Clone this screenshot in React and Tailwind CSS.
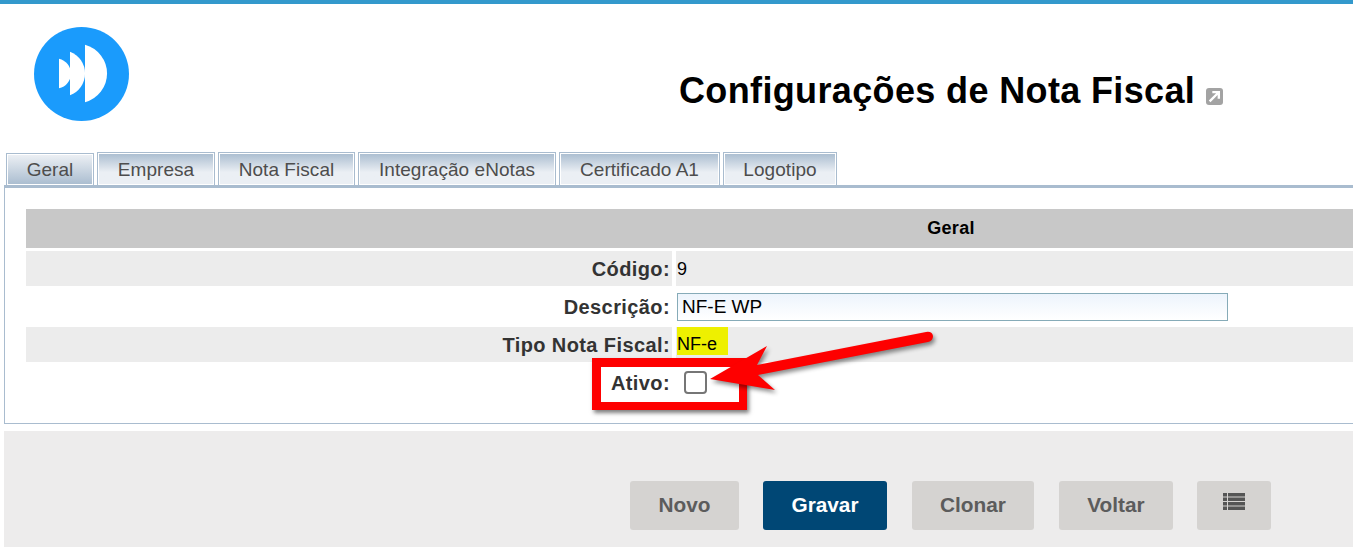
const tabs = [
  { label: "Empresa", width: "w-[118px]" },
  { label: "Nota Fiscal", width: "w-[137px]" },
  { label: "Integração eNotas", width: "w-[198px]" },
  { label: "Certificado A1", width: "w-[161px]" },
  { label: "Logotipo", width: "w-[114px]" },
];

const buttons = [
  { label: "Novo", width: "w-[109px]", margin: "ml-[626px]" },
  { label: "Gravar", width: "w-[124px]", margin: "ml-[24px]", primary: true },
  { label: "Clonar", width: "w-[122px]", margin: "ml-[25px]" },
  { label: "Voltar", width: "w-[114px]", margin: "ml-[25px]" },
];

function Logo() {
  return (
    <svg width="95" height="94" viewBox="0 0 95 95" preserveAspectRatio="none" className="shrink-0">
      <circle cx="47.5" cy="47.5" r="47.5" fill="#1a9bfc" />
      <path d="M25 32 A15.4 15.4 0 0 1 25 62 Z" fill="#fff" />
      <path d="M36 25 A23.6 23.6 0 0 1 36 69 Z" fill="#fff" />
      <path d="M51 18 A30.1 30.1 0 0 1 51 76 Z" fill="#fff" />
    </svg>
  );
}

function Row({ label, shaded, tall, children }) {
  return (
    <div className={`flex ${tall ? "h-[41px]" : "h-[35px]"}`}>
      <div className={`w-[646px] shrink-0 pr-[2px] flex items-center justify-end text-[20px] tracking-[0.4px] font-bold text-[#333] ${shaded ? "bg-[#ececec]" : ""}`}>
        {label}
      </div>
      <div className={`flex-1 ml-[4px] flex items-center text-[18px] text-black ${shaded ? "bg-[#ececec]" : ""}`}>
        {children}
      </div>
    </div>
  );
}

export default function App() {
  return (
    <div className="h-[549px] overflow-hidden bg-white font-['Liberation_Sans',Arial,sans-serif]">
      <div className="w-[1880px]">
        <div className="h-[4px] bg-[#3399cc]" />

        {/* Cabecera */}
        <div className="h-[148px] pt-[23px] pl-[34px] flex items-start">
          <Logo />
          <h1 className="ml-[550px] mt-[42px] text-[36px] leading-[44px] tracking-[0.36px] font-bold text-black whitespace-nowrap">
            Configurações de Nota Fiscal
          </h1>
          <span className="ml-[11px] mt-[61px] w-[17px] h-[17px] rounded-[3px] bg-[#a3a3a3] flex items-center justify-center">
            <svg width="13" height="13" viewBox="0 0 12 12">
              <path d="M1.5 10.5 L9 3 M4 2 H10 V8" stroke="#fff" strokeWidth="2.2" fill="none" />
            </svg>
          </span>
        </div>

        {/* Pestañas */}
        <div className="flex items-end h-[33px] pl-[6px] gap-[3px] relative">
          <div className="w-[88px] h-[32px] border border-[#a9bccf] border-b-0 shadow-[inset_0_0_0_1px_#fff] bg-gradient-to-b from-[#eef1f5] to-[#a9bccf] text-[19px] text-[#4d4d4d] flex items-center justify-center pt-[2px]">
            Geral
          </div>
          {tabs.map((t) => (
            <div key={t.label} className={`${t.width} h-[33px] pt-[2px] border border-[#a9bccf] border-b-0 shadow-[inset_0_0_0_1px_#fff] bg-gradient-to-b from-[#a9bccf] to-[#ebeff4] to-60% text-[19px] tracking-[0.05px] text-[#4d4d4d] flex items-center justify-center`}>
              {t.label}
            </div>
          ))}
        </div>

        {/* Panel */}
        <div className="ml-[4px] h-[239px] border border-[#a9bccf] border-t-[3px] pt-[21px] pl-[21px]">
          <div className="w-[1850px]">
            <div className="h-[39px] bg-[#c8c8c8] flex items-center justify-center text-[18px] tracking-[0.3px] font-bold text-black mb-[3px]">
              Geral
            </div>
            <Row label="Código:" shaded>
              <span className="ml-[1px] mt-[1px]">9</span>
            </Row>
            <Row label="Descrição:" tall>
              <input
                readOnly
                value="NF-E WP"
                className="w-[551px] h-[28px] ml-[1px] pt-[1px] border border-[#86abb8] bg-gradient-to-b from-[#edf4fc] to-white px-[4px] text-[19px] text-black outline-none"
              />
            </Row>
            <Row label="Tipo Nota Fiscal:" shaded>
              <span className="h-[28px] w-[51px] ml-[1px] mb-[7px] bg-[#eef000] flex items-end leading-[21px]">NF-e</span>
            </Row>
            <Row label="Ativo:" tall>
              <span className="ml-[8px] w-[23px] h-[23px] rounded-[4px] border-2 border-[#767676] bg-white" />
            </Row>
          </div>
        </div>

        {/* Botones */}
        <div className="ml-[4px] mt-[7px] h-[116px] bg-[#edecec] pt-[50px] flex items-start">
          {buttons.map((b) => (
            <button
              key={b.label}
              className={`${b.width} ${b.margin} h-[49px] pb-[2px] rounded-[3px] text-[20.8px] font-bold ${b.primary ? "bg-[#004775] text-white" : "bg-[#d5d3d1] text-[#5c5c5c]"}`}
            >
              {b.label}
            </button>
          ))}
          <button className="ml-[24px] w-[74px] h-[49px] rounded-[3px] bg-[#d5d3d1] flex justify-center pt-[12px]">
            <svg width="22" height="18" viewBox="0 0 22 18" fill="#555">
              <rect x="0" y="0" width="4" height="3.5" />
              <rect x="5" y="0" width="17" height="3.5" />
              <rect x="0" y="4.5" width="4" height="3.5" />
              <rect x="5" y="4.5" width="17" height="3.5" />
              <rect x="0" y="9" width="4" height="3.5" />
              <rect x="5" y="9" width="17" height="3.5" />
              <rect x="0" y="13.5" width="4" height="3.5" />
              <rect x="5" y="13.5" width="17" height="3.5" />
            </svg>
          </button>
        </div>
      </div>

      {/* Anotación roja sobre la captura */}
      <div className="absolute left-[592px] top-[358px] w-[155px] h-[52px] border-[9px] border-b-[8px] border-r-[8px] border-[#fe0000] shadow-[2px_3px_4px_rgba(0,0,0,0.5)]" />
      <svg width="260" height="90" viewBox="0 0 260 90" className="absolute left-[700px] top-[325px] drop-shadow-[2px_3px_2px_rgba(0,0,0,0.45)]">
        <path
          d="M10 54 L67 21 L57 40 L226 7 Q232 6 233 11 Q233 16 228 17 L58 50 L75 65 Z"
          fill="#fe0000"
        />
      </svg>
    </div>
  );
}
